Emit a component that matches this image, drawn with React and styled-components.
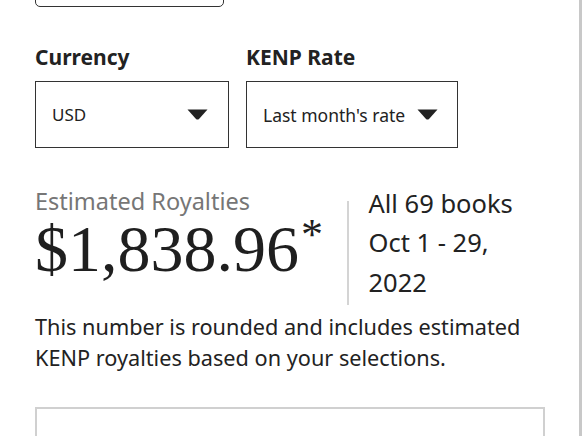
import React from 'react'
import styled, { createGlobalStyle } from 'styled-components'

const Global = createGlobalStyle`
  html, body {
    margin: 0;
    padding: 0;
    background: #fff;
  }
  body {
    font-family: "Noto Sans", "Liberation Sans", sans-serif;
    color: #222;
    overflow: hidden;
  }
`

const Page = styled.div`
  position: relative;
  width: 586px;
  height: 436px;
  overflow: hidden;
`

const ScrollTrack = styled.div`
  position: absolute;
  top: 0;
  right: 4px;
  width: 3px;
  height: 100%;
  background: #c8c8c8;
`

const Content = styled.div`
  padding: 0 0 0 35px;
  width: 510px;
  display: flex;
  flex-direction: column;
`

const TopBox = styled.div`
  margin-top: -30px;
  width: 189px;
  height: 37px;
  box-sizing: border-box;
  border: 1.5px solid #333;
  border-radius: 5px;
`

const Filters = styled.div`
  margin-top: 36px;
  display: flex;
  gap: 17px;
`

const Field = styled.div`
  display: flex;
  flex-direction: column;
`

const Label = styled.div`
  font-size: 21px;
  font-weight: 700;
  color: #222;
  line-height: 28px;
  margin-bottom: 10px;
`

const Select = styled.div`
  box-sizing: border-box;
  width: ${p => p.w}px;
  height: 67px;
  border: 1.5px solid #333;
  display: flex;
  align-items: center;
  justify-content: space-between;
  padding: 0 ${p => p.pr}px 0 16px;
  font-size: ${p => p.fs}px;
  color: #222;
`

const Caret = styled.svg`
  width: 21px;
  height: 11px;
  flex-shrink: 0;
`

const Summary = styled.div`
  margin-top: 39px;
  display: flex;
  align-items: stretch;
`

const Left = styled.div`
  display: flex;
  flex-direction: column;
  padding-right: 24px;
`

const Muted = styled.div`
  font-size: 23.5px;
  color: #767676;
  line-height: 28px;
`

const Amount = styled.div`
  font-family: "Liberation Serif", "DejaVu Serif", serif;
  font-size: 66px;
  line-height: 64px;
  color: #1f1f1f;
  margin-top: 2px;
  sup {
    font-size: 44px;
    line-height: 0;
    vertical-align: top;
    position: relative;
    top: 18px;
    margin-left: 2px;
  }
`

const Divider = styled.div`
  width: 1.5px;
  background: #d4d4d4;
  margin-top: 14px;
  margin-bottom: -3px;
`

const Right = styled.div`
  padding-left: 20px;
  font-size: 25.5px;
  line-height: 39.5px;
  color: #222;
  margin-top: -3.5px;
`

const Note = styled.p`
  margin: 8.5px 0 0 0;
  font-size: 21.7px;
  line-height: 31px;
  color: #222;
`

const BottomBox = styled.div`
  margin-top: 34.5px;
  width: 510px;
  height: 60px;
  box-sizing: border-box;
  border: 2px solid #d0d0d0;
`

function Triangle() {
  return (
    <Caret viewBox="0 0 21 11">
      <path d="M0.5 0.5 H20.5 L12 10 Q10.5 11.2 9 10 Z" fill="#222" />
    </Caret>
  )
}

export default function App() {
  return (
    <>
      <Global />
      <Page>
        <ScrollTrack />
        <Content>
          <TopBox />
          <Filters>
            <Field>
              <Label>Currency</Label>
              <Select w={194} pr={20} fs={17}>
                USD
                <Triangle />
              </Select>
            </Field>
            <Field>
              <Label>KENP Rate</Label>
              <Select w={212} pr={19} fs={17.5}>
                Last month's rate
                <Triangle />
              </Select>
            </Field>
          </Filters>
          <Summary>
            <Left>
              <Muted>Estimated Royalties</Muted>
              <Amount>
                $1,838.96<sup>*</sup>
              </Amount>
            </Left>
            <Divider />
            <Right>
              All 69 books
              <br />
              Oct 1 - 29,
              <br />
              2022
            </Right>
          </Summary>
          <Note>
            This number is rounded and includes estimated KENP royalties based
            on your selections.
          </Note>
          <BottomBox />
        </Content>
      </Page>
    </>
  )
}
